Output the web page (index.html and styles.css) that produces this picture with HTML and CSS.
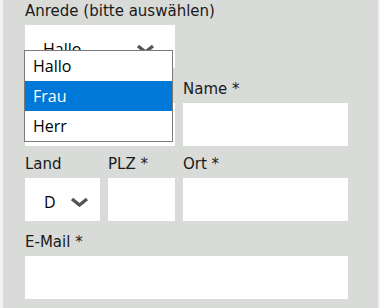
FILE: index.html
```html
<!DOCTYPE html>
<html lang="de">
<head>
    <meta charset="UTF-8">
    <meta name="viewport" content="width=device-width, initial-scale=1.0">
    <title>Kontakt</title>
    <link rel="stylesheet" href="styles.css">
</head>
<body>

<div class="page">
    <form class="contact-form">
        <div class="field field-wide anrede">
            <label>Anrede (bitte auswählen)</label>
            <div class="select select-anrede">
                <span>Hallo</span>
                <svg class="chevron" width="19" height="10" viewBox="0 0 19 10"><polyline points="2,2 9.5,8 17,2" fill="none" stroke="#555" stroke-width="3.4"/></svg>
            </div>
            <ul class="dropdown">
                <li>Hallo</li>
                <li class="selected">Frau</li>
                <li>Herr</li>
            </ul>
        </div>

        <div class="field field-wide field-tight">
            <label for="vorname">Vorname *</label>
            <input type="text" id="vorname">
        </div>
        <div class="field field-tight">
            <label for="name">Name *</label>
            <input type="text" id="name">
        </div>

        <div class="field">
            <label>Land</label>
            <div class="select select-land">
                <span>D</span>
                <svg class="chevron" width="19" height="10" viewBox="0 0 19 10"><polyline points="2,2 9.5,8 17,2" fill="none" stroke="#555" stroke-width="3.4"/></svg>
            </div>
        </div>
        <div class="field">
            <label for="plz">PLZ *</label>
            <input type="text" id="plz">
        </div>
        <div class="field">
            <label for="ort">Ort *</label>
            <input type="text" id="ort">
        </div>

        <div class="field field-full">
            <label for="email">E-Mail *</label>
            <input type="text" id="email">
        </div>
    </form>
</div>

</body>
</html>
```

FILE: styles.css
```css
body {
    margin: 0;
    background-color: #f2f2f2;
    font-family: "Open Sans", Arial, sans-serif;
    color: #1a1a1a;
}

.page {
    margin-left: 3px;
    width: 375px;
    height: 308px;
    box-sizing: border-box;
    padding: 1px 0 0 22px;
    background-color: #d9dbd8;
}

.contact-form {
    display: grid;
    grid-template-columns: 75px 67px 165px;
    column-gap: 8px;
}

.field {
    margin-bottom: 11px;
}

.field-tight {
    margin-bottom: 8px;
}

.field-wide {
    grid-column: span 2;
}

.field-full {
    grid-column: span 3;
}

.anrede {
    position: relative;
}

label {
    display: block;
    font-family: "DejaVu Sans", Verdana, sans-serif;
    font-size: 15px;
    line-height: 21px;
    margin-bottom: 3px;
    white-space: nowrap;
}

input {
    display: block;
    width: 100%;
    height: 43px;
    box-sizing: border-box;
    border: none;
    margin: 0;
    background-color: #fff;
}

.select {
    display: flex;
    align-items: center;
    justify-content: space-between;
    height: 43px;
    box-sizing: border-box;
    padding-top: 4px;
    background-color: #fff;
    font-size: 16px;
    line-height: 22px;
    color: #000;
}

.select-anrede {
    padding-left: 18px;
    padding-right: 20px;
}

.select-land {
    padding-left: 19px;
    padding-right: 11px;
}

.chevron {
    display: block;
}

.dropdown {
    position: absolute;
    left: -1px;
    top: 49px;
    width: 149px;
    margin: 0;
    padding: 0;
    list-style: none;
    box-sizing: border-box;
    border: 1px solid #7a7a7a;
    background-color: #fff;
    font-size: 16px;
    color: #000;
}

.dropdown li {
    height: 30px;
    line-height: 30px;
    padding-left: 8px;
}

.dropdown .selected {
    background-color: #0078d7;
    color: #fff;
}
```
